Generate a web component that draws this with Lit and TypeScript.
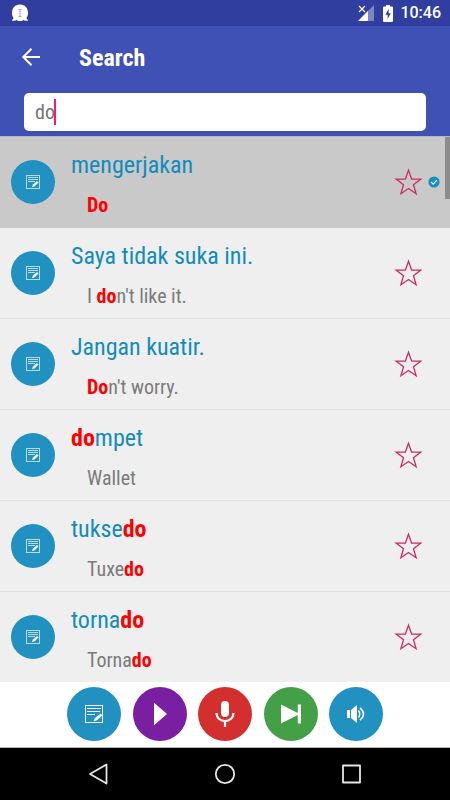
import { LitElement, html, css, svg } from "lit";
import { customElement, property } from "lit/decorators.js";

interface Entry {
  term: string;
  meaning: string;
  selected?: boolean;
}

const QUERY = "do";

const ENTRIES: Entry[] = [
  { term: "mengerjakan", meaning: "Do", selected: true },
  { term: "Saya tidak suka ini.", meaning: "I don't like it." },
  { term: "Jangan kuatir.", meaning: "Don't worry." },
  { term: "dompet", meaning: "Wallet" },
  { term: "tuksedo", meaning: "Tuxedo" },
  { term: "tornado", meaning: "Tornado" },
];

/** Splits the text round each match of the query and marks the matches. */
const highlight = (text: string) =>
  text
    .split(new RegExp(`(${QUERY})`, "i"))
    .map((part) => (part.toLowerCase() === QUERY ? html`<mark>${part}</mark>` : part));

const noteShape = svg`
  <rect x="1.500" y="1.500" width="17" height="17" fill="none" stroke="currentColor"/>
  <path d="M3 4.500h14M3 7.500h13M3 10.500h8" stroke="currentColor" fill="none"/>
  <path d="M9.500 17.200l1.200-2.800 5.800-5 1.900 2-5.800 5z" fill="currentColor"/>`;

const smallNoteShape = svg`
  <rect x=".5" y=".5" width="13" height="13" fill="none" stroke="currentColor"/>
  <path d="M2 2.500h10M2 4.500h10M2 6.500h7" stroke="currentColor" fill="none"/>
  <path d="M6 12l.8-2.200 4.200-3.800 1.600 1.600-4.200 3.800z" fill="#fff"/>`;

const resets = css`
  :host {
    box-sizing: border-box;
    font-family: "Roboto Condensed", "Liberation Sans Narrow", Roboto, sans-serif;
  }
  *, *::before, *::after { box-sizing: border-box; }
  svg { display: block; }
  button {
    margin: 0;
    padding: 0;
    border: 0;
    background: none;
    color: inherit;
    font: inherit;
    display: grid;
    place-items: center;
    cursor: pointer;
  }
`;

@customElement("status-bar")
export class StatusBar extends LitElement {
  static styles = [
    resets,
    css`
      :host {
        display: flex;
        align-items: center;
        height: 26px;
        padding: 0 9px 0 11px;
        background: #303f9f;
        color: #fff;
      }
      .spacer { flex: 1; }
      .signal { margin-right: 9px; }
      .battery { margin-right: 7px; }
      time { font: 500 16px/28px Roboto, sans-serif; }
    `,
  ];
  render() {
    return html`
      <svg width="18" height="18" viewBox="0 0 18 18" aria-hidden="true">
        <path d="M9 .5C4 .5 1 4 1 9c0 2 .6 3.700 1.600 5L.8 16.800l3.700-.1.500-1c1 .7 2.500 1.300 4 1.300s3-.6 4-1.300l.5 1 3.700.1L15.400 14c1-1.300 1.600-3 1.600-5 0-5-3-8.500-8-8.500z" fill="#fff"/>
        <path d="M7.500 5.500h3M9 5.500v7M7.500 12.500h3" stroke="#9fa6d3" fill="none"/>
      </svg>
      <span class="spacer"></span>
      <svg class="signal" width="16" height="16" viewBox="0 0 16 16" aria-hidden="true">
        <path d="M16 0v16H0z" fill="#7c86c5"/>
        <path d="M10 6v10H0z" fill="#fff"/>
        <path d="M0 0h8v7H0z" fill="#303f9f"/>
        <path d="M1 1l6 6M7 1L1 7" stroke="#fff" stroke-width="1.200"/>
      </svg>
      <svg class="battery" width="10" height="17" viewBox="0 0 10 17" aria-hidden="true">
        <path d="M3 0h4v1.500h2q1 0 1 1V16q0 1-1 1H1q-1 0-1-1V2.500q0-1 1-1h2z" fill="#fff"/>
        <path d="M5.600 4L2.400 9.800h2.200V14L7.700 8.300H5.600z" fill="#303f9f"/>
      </svg>
      <time datetime="10:46">10:46</time>
    `;
  }
}

@customElement("search-header")
export class SearchHeader extends LitElement {
  static styles = [
    resets,
    css`
      :host {
        display: block;
        padding: 8px 24px 5px;
        background: #3f51b5;
        color: #fff;
      }
      .bar {
        display: flex;
        align-items: center;
        height: 48px;
        margin-bottom: 11px;
      }
      .back { width: 24px; height: 24px; margin-left: -5px; }
      h1 { margin: 0 0 0 36px; font-size: 24px; line-height: 32px; font-weight: 700; }
      .field { position: relative; display: block; }
      input {
        display: block;
        width: 100%;
        height: 38px;
        padding: 0 11px;
        border: 0;
        border-radius: 5px;
        outline: 0;
        background: #fff;
        color: #757575;
        caret-color: transparent;
        font: 400 20px/38px "Roboto Condensed", "Liberation Sans Narrow", Roboto, sans-serif;
      }
      .caret {
        position: absolute;
        left: 30px;
        top: 6px;
        width: 2px;
        height: 26px;
        background: #ff1470;
      }
    `,
  ];
  render() {
    return html`
      <div class="bar">
        <button class="back" aria-label="Back">
          <svg width="24" height="24" viewBox="0 0 24 24" fill="none" stroke="#fff" stroke-width="2">
            <path d="M21 11H4M12.500 2.800L4.300 11l8.200 8.200"/>
          </svg>
        </button>
        <h1>Search</h1>
      </div>
      <div class="field">
        <input type="text" aria-label="Search" .value=${QUERY} />
        <span class="caret"></span>
      </div>
    `;
  }
}

@customElement("entry-row")
export class EntryRow extends LitElement {
  @property({ attribute: false }) entry!: Entry;

  static styles = [
    resets,
    css`
      :host { display: block; }
      .row {
        display: grid;
        grid-template-columns: 44px 1fr 28px 18px;
        align-items: center;
        height: 91px;
        padding: 0 10px 0 11px;
        background: #efefef;
        border-bottom: 1px solid #e0e0e0;
      }
      .selected { background: #c9c9c9; border-color: #c9c9c9; }
      .note {
        width: 44px;
        height: 44px;
        border-radius: 50%;
        background: #2091c0;
        color: #b9dbea;
      }
      .text { padding: 6px 0 0 16px; white-space: nowrap; }
      .term { margin: 0; font-size: 24px; line-height: 32px; font-weight: 400; color: #118cbd; }
      .meaning { margin: 8px 0 0; padding-left: 16px; font-size: 20px; line-height: 32px; color: #7b7b7b; }
      mark { background: none; color: #f00; font-weight: 700; }
      .star { width: 28px; height: 28px; }
      .check { justify-self: end; }
    `,
  ];
  render() {
    const { term, meaning, selected } = this.entry;
    return html`
      <div class="row ${selected ? "selected" : ""}">
        <button class="note" aria-label="Show note">
          <svg width="14" height="14" viewBox="0 0 14 14">${smallNoteShape}</svg>
        </button>
        <div class="text">
          <h2 class="term">${highlight(term)}</h2>
          <p class="meaning">${highlight(meaning)}</p>
        </div>
        <button class="star" aria-label="Add to favourites">
          <svg width="28" height="28" viewBox="0 0 28 28" fill="none" stroke="#c92f63" stroke-width="1.300">
            <path d="M14.500 2.200l3.100 8.800 9.300.1-7.400 5.700 2.600 8.900-7.600-5.200-7.600 5.200 2.600-8.900-7.400-5.700 9.300-.1z"/>
          </svg>
        </button>
        ${selected
          ? html`<svg class="check" width="12" height="12" viewBox="0 0 12 12" role="img" aria-label="Selected">
              <circle cx="6" cy="6" r="5.600" fill="#1690c2"/>
              <path d="M3.200 6.200l1.900 1.900 3.900-3.900" fill="none" stroke="#fff" stroke-width="1.200"/>
            </svg>`
          : ""}
      </div>
    `;
  }
}

@customElement("action-bar")
export class ActionBar extends LitElement {
  static styles = [
    resets,
    css`
      :host {
        display: flex;
        justify-content: center;
        height: 66px;
        padding-top: 5px;
        background: #fff;
        border-bottom: 1px solid #b5b5b5;
      }
      .actions { display: flex; justify-content: space-between; width: 316px; }
      button { width: 54px; height: 54px; border-radius: 50%; color: #fff; }
      .blue { background: #2091c0; }
      .purple { background: #7b1fa2; }
      .red { background: #d32f2f; }
      .green { background: #43a047; }
    `,
  ];
  render() {
    return html`
      <div class="actions">
        <button class="blue" aria-label="Note">
          <svg width="20" height="20" viewBox="0 0 20 20">${noteShape}</svg>
        </button>
        <button class="purple" aria-label="Play">
          <svg width="14" height="24" viewBox="0 0 14 24"><path d="M1 .8L14 12 1 23.200z" fill="currentColor"/></svg>
        </button>
        <button class="red" aria-label="Record">
          <svg width="20" height="26" viewBox="0 0 20 26">
            <rect x="6" y="0" width="8" height="16" rx="4" fill="currentColor"/>
            <path d="M1.500 12c0 4.500 3.700 8 8.500 8s8.500-3.500 8.500-8M10 20v6" fill="none" stroke="currentColor" stroke-width="2.200"/>
          </svg>
        </button>
        <button class="green" aria-label="Next">
          <svg width="20" height="20" viewBox="0 0 20 20"><path d="M0 .5L16.800 9V.5H20v19h-3.200V11L0 19.500z" fill="currentColor"/></svg>
        </button>
        <button class="blue" aria-label="Sound">
          <svg width="20" height="18" viewBox="0 0 20 18">
            <path d="M1 5h3v8H1zM5 5l6-5v18l-6-5z" fill="currentColor"/>
            <path d="M12.500 5.500q2.500 3.500 0 7" fill="none" stroke="currentColor" stroke-width="1.400"/>
            <path d="M14 2.800q7 6.200 0 12.400" fill="none" stroke="currentColor" stroke-width="1.600"/>
          </svg>
        </button>
      </div>
    `;
  }
}

@customElement("system-nav")
export class SystemNav extends LitElement {
  static styles = [
    resets,
    css`
      :host {
        display: flex;
        justify-content: center;
        align-items: center;
        gap: 104px;
        height: 52px;
        background: #000;
        color: #e6e6e6;
      }
    `,
  ];
  render() {
    return html`
      <button aria-label="Back">
        <svg width="22" height="22" viewBox="0 0 22 22" fill="none" stroke="currentColor" stroke-width="1.800" stroke-linejoin="round">
          <path d="M18.500 1.500v19L2 11z"/>
        </svg>
      </button>
      <button aria-label="Home">
        <svg width="22" height="22" viewBox="0 0 22 22" fill="none" stroke="currentColor" stroke-width="1.800">
          <circle cx="11" cy="11" r="9.200"/>
        </svg>
      </button>
      <button aria-label="Recent apps">
        <svg width="22" height="22" viewBox="0 0 22 22" fill="none" stroke="currentColor" stroke-width="1.800" stroke-linejoin="round">
          <path d="M3 2.500h17v17H3z"/>
        </svg>
      </button>
    `;
  }
}

@customElement("app-root")
export class AppRoot extends LitElement {
  static styles = [
    resets,
    css`
      :host {
        display: flex;
        flex-direction: column;
        height: 100vh;
        background: #efefef;
      }
      status-bar, search-header, action-bar, system-nav { flex: none; }
      .results {
        position: relative;
        flex: 1;
        min-height: 0;
        overflow: hidden;
        border-top: 1px solid #b4b6c4;
      }
      ul { margin: 0; padding: 0; list-style: none; }
      .thumb {
        position: absolute;
        top: 0;
        right: 0;
        width: 5px;
        height: 62px;
        background: #8c8c8c;
      }
    `,
  ];
  render() {
    return html`
      <status-bar></status-bar>
      <search-header></search-header>
      <main class="results">
        <ul>
          ${ENTRIES.map((entry) => html`<li><entry-row .entry=${entry}></entry-row></li>`)}
        </ul>
        <span class="thumb"></span>
      </main>
      <action-bar></action-bar>
      <system-nav></system-nav>
    `;
  }
}
